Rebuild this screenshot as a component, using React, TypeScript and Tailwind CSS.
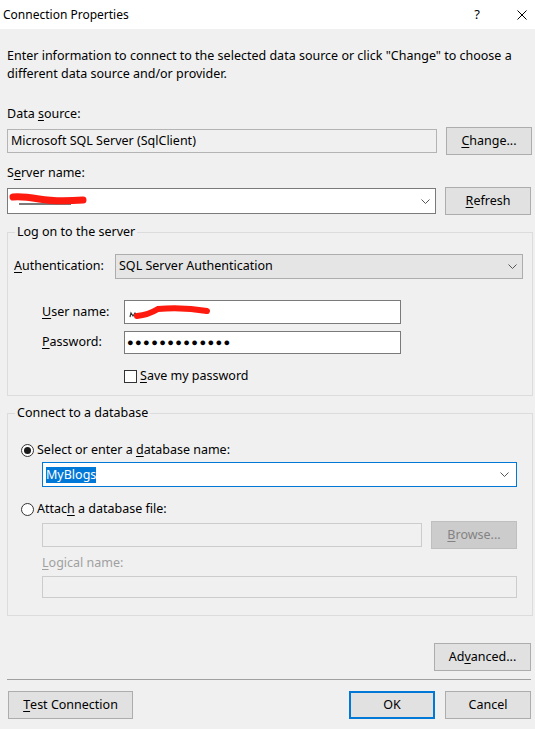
import React from "react"

const font = { fontFamily: '"Noto Sans", "Liberation Sans", sans-serif' }

function Chevron() {
  return (
    <svg width="9" height="5" viewBox="0 0 9 5" className="shrink-0">
      <polyline points="0.5,0.5 4.5,4.5 8.5,0.5" fill="none" stroke="#555" strokeWidth="1" />
    </svg>
  )
}

function Key({ children }: { children: React.ReactNode }) {
  return <span className="underline underline-offset-[2px] decoration-[1px]">{children}</span>
}

function Btn({
  children,
  className = "",
}: {
  children: React.ReactNode
  className?: string
}) {
  return (
    <div
      className={
        "h-[28px] shrink-0 flex items-center justify-center bg-[#e1e1e1] border border-[#adadad] text-[12.5px] text-black " +
        className
      }
    >
      {children}
    </div>
  )
}

function Radio({ checked }: { checked?: boolean }) {
  return (
    <div className="w-[13px] h-[13px] rounded-full border border-[#333] bg-white flex items-center justify-center shrink-0">
      {checked && <div className="w-[7px] h-[7px] rounded-full bg-[#1a1a1a]" />}
    </div>
  )
}

export default function App() {
  return (
    <div className="w-[535px] h-[729px] bg-[#f0f0f0] text-black text-[12.5px] overflow-hidden" style={font}>
      {/* Title bar */}
      <div className="h-[29px] bg-white flex items-center pl-[3px] pr-[8px]">
        <span className="text-[12px]">Connection Properties</span>
        <span className="ml-auto text-[13px] mr-[37px]">?</span>
        <svg width="10" height="10" viewBox="0 0 10 10">
          <path d="M0.5 0.5 L9.5 9.5 M9.5 0.5 L0.5 9.5" stroke="#000" strokeWidth="1" />
        </svg>
      </div>

      <div className="pl-[7px] flex flex-col">
        <p className="mt-[18px] leading-[18px] w-[520px]">
          Enter information to connect to the selected data source or click "Change" to choose a different data
          source and/or provider.
        </p>

        {/* Data source */}
        <div className="mt-[23px] leading-[16px]">
          Data <Key>s</Key>ource:
        </div>
        <div className="mt-[5px] flex items-center gap-[9px]">
          <div className="w-[430px] h-[24px] border border-[#b4b4b4] bg-[#f0f0f0] flex items-center pl-[3px]">
            Microsoft SQL Server (SqlClient)
          </div>
          <Btn className="w-[86px]">
            <Key>C</Key>hange...
          </Btn>
        </div>

        {/* Server name */}
        <div className="mt-[10px] leading-[16px]">
          S<Key>e</Key>rver name:
        </div>
        <div className="mt-[6px] flex items-center gap-[9px]">
          <div className="relative w-[429px] h-[26px] border border-[#7a7a7a] bg-white flex items-center pr-[5px]">
            <svg width="80" height="16" viewBox="0 0 80 16" className="absolute left-[1px] top-[3px]">
              <path d="M10 12 L62 12" stroke="#222" strokeWidth="2" opacity="0.6" />
              <path d="M4 5 Q12 4 30 7 T74 8" fill="none" stroke="#ff1a0f" strokeWidth="7" strokeLinecap="round" />
            </svg>
            <div className="ml-auto">
              <Chevron />
            </div>
          </div>
          <Btn className="w-[86px]">
            <Key>R</Key>efresh
          </Btn>
        </div>

        {/* Log on group */}
        <fieldset className="mt-[9px] w-[526px] border border-[#dcdcdc] pb-[10px]">
          <legend className="ml-[7px] px-[2px] leading-[16px]">Log on to the server</legend>
          <div className="mt-[14px] flex items-center">
            <div className="w-[107px] pl-[6px] shrink-0">
              <Key>A</Key>uthentication:
            </div>
            <div className="w-[408px] h-[25px] border border-[#adadad] bg-[#e5e5e5] flex items-center pl-[3px] pr-[5px]">
              SQL Server Authentication
              <div className="ml-auto">
                <Chevron />
              </div>
            </div>
          </div>
          <div className="mt-[21px] flex items-center">
            <div className="w-[116px] pl-[34px] shrink-0">
              <Key>U</Key>ser name:
            </div>
            <div className="relative w-[277px] h-[24px] border border-[#7a7a7a] bg-white">
              <svg width="84" height="16" viewBox="0 0 84 16" className="absolute left-[3px] top-[4px]">
                <path d="M2 12 L3 8 L5 11 L7 8 L9 11" fill="none" stroke="#333" strokeWidth="1.2" />
                <path d="M9 11 Q20 10 30 4 Q55 2 79 6" fill="none" stroke="#ff1a0f" strokeWidth="6" strokeLinecap="round" />
              </svg>
            </div>
          </div>
          <div className="mt-[7px] flex items-center">
            <div className="w-[116px] pl-[34px] shrink-0">
              <Key>P</Key>assword:
            </div>
            <div className="w-[277px] h-[23px] border border-[#7a7a7a] bg-white flex items-center pl-[2px] text-[11px] tracking-[1.4px]">
              ●●●●●●●●●●●●●
            </div>
          </div>
          <div className="mt-[14px] h-[17px] flex items-center pl-[116px] gap-[3px]">
            <div className="w-[13px] h-[13px] border border-[#333] bg-white shrink-0" />
            <span>
              <Key>S</Key>ave my password
            </span>
          </div>
        </fieldset>

        {/* Connect to a database group */}
        <fieldset className="mt-[9px] w-[526px] border border-[#dcdcdc] pb-[17px]">
          <legend className="ml-[7px] px-[2px] leading-[16px]">Connect to a database</legend>
          <div className="mt-[21px] h-[16px] flex items-center pl-[13px] gap-[3px]">
            <Radio checked />
            <span>
              Select or enter a <Key>d</Key>atabase name:
            </span>
          </div>
          <div className="mt-[4px] ml-[34px] w-[475px] h-[25px] border border-[#0078d7] bg-white flex items-center pl-[3px] pr-[7px]">
            <span className="bg-[#0078d7] text-white leading-[16px]">MyBlogs</span>
            <div className="ml-auto">
              <Chevron />
            </div>
          </div>
          <div className="mt-[14px] h-[16px] flex items-center pl-[13px] gap-[3px]">
            <Radio />
            <span>
              Attac<Key>h</Key> a database file:
            </span>
          </div>
          <div className="mt-[4px] ml-[34px] flex items-center gap-[9px]">
            <div className="w-[380px] h-[24px] border border-[#cccccc] bg-[#f0f0f0]" />
            <Btn className="w-[86px] !bg-[#cccccc] !border-[#bfbfbf] !text-[#838383]">
              <Key>B</Key>rowse...
            </Btn>
          </div>
          <div className="mt-[6px] ml-[34px] leading-[16px] text-[#a0a0a0]">
            <Key>L</Key>ogical name:
          </div>
          <div className="mt-[5px] ml-[34px] w-[475px] h-[22px] border border-[#cccccc] bg-[#f0f0f0]" />
        </fieldset>

        {/* Advanced */}
        <Btn className="mt-[27px] ml-[427px] w-[97px]">
          Ad<Key>v</Key>anced...
        </Btn>

        <div className="mt-[8px] w-[524px] h-px bg-[#a0a0a0]" />

        {/* Bottom buttons */}
        <div className="mt-[11px] flex items-center">
          <Btn className="ml-[1px] w-[125px]">
            <Key>T</Key>est Connection
          </Btn>
          <Btn className="ml-[216px] w-[86px] !border-2 !border-[#0078d7]">OK</Btn>
          <Btn className="ml-[10px] w-[86px]">Cancel</Btn>
        </div>
      </div>
    </div>
  )
}
